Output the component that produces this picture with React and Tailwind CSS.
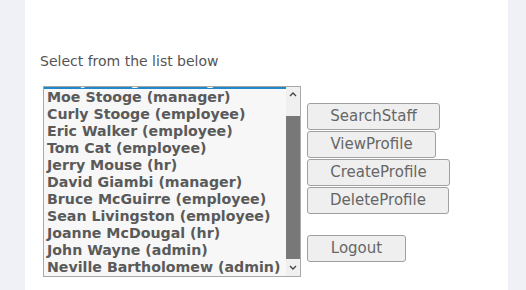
const STAFF = [
  'Larry Stooge (manager)',
  'Moe Stooge (manager)',
  'Curly Stooge (employee)',
  'Eric Walker (employee)',
  'Tom Cat (employee)',
  'Jerry Mouse (hr)',
  'David Giambi (manager)',
  'Bruce McGuirre (employee)',
  'Sean Livingston (employee)',
  'Joanne McDougal (hr)',
  'John Wayne (admin)',
  'Neville Bartholomew (admin)',
];

const BUTTONS = [
  { label: 'SearchStaff', w: 'w-[133px]' },
  { label: 'ViewProfile', w: 'w-[129px]' },
  { label: 'CreateProfile', w: 'w-[143px]' },
  { label: 'DeleteProfile', w: 'w-[142px]' },
];

function Btn({ label, w }) {
  return (
    <button className={`${w} h-[27px] rounded-[3px] border border-[#a0a0a0] bg-[#efefef] text-[15px] text-[#666] leading-none`}>
      {label}
    </button>
  );
}

export default function App() {
  return (
    <div className="min-h-[290px] bg-[#eff1f6] font-['DejaVu_Sans',sans-serif]">
      <div className="ml-[25px] w-[483px] h-[290px] bg-white">
        <p className="pt-[53px] pl-[15px] text-[14px] leading-[17px] text-[#555]">Select from the list below</p>

        <div className="mt-[16px] ml-[18px] flex">
          {/* listbox */}
          <div className="w-[258px] h-[191px] border border-[#a9a9a9] bg-[#f7f7f7] flex overflow-hidden">
            <div className="flex-1 overflow-hidden">
              <div className="-mt-[15px]">
                {STAFF.map((s, i) => (
                  <div
                    key={s}
                    className={`pl-[3px] h-[17px] text-[14.2px] leading-[17px] font-bold whitespace-nowrap ${i === 0 ? 'bg-[#1e88c8] text-white' : 'text-[#5a5a5a]'}`}
                  >
                    {s}
                  </div>
                ))}
              </div>
            </div>
            {/* scrollbar */}
            <div className="w-[14px] flex flex-col bg-[#f0f0f0]">
              <div className="h-[29px] flex justify-center pt-[1px]">
                <svg width="8" height="6" viewBox="0 0 8 6" className="mt-[3px]">
                  <path d="M1 5 L4 2 L7 5" fill="none" stroke="#444" strokeWidth="1.4" />
                </svg>
              </div>
              <div className="h-[143px] bg-[#787878]" />
              <div className="flex-1 flex justify-center items-center">
                <svg width="8" height="6" viewBox="0 0 8 6">
                  <path d="M1 1 L4 4 L7 1" fill="none" stroke="#444" strokeWidth="1.4" />
                </svg>
              </div>
            </div>
          </div>

          {/* buttons */}
          <div className="ml-[6px] pt-[17px] flex flex-col items-start">
            <div className="flex flex-col gap-[1px]">
              {BUTTONS.map((b) => (
                <Btn key={b.label} {...b} />
              ))}
            </div>
            <div className="mt-[21px]">
              <Btn label="Logout" w="w-[99px]" />
            </div>
          </div>
        </div>
      </div>
    </div>
  );
}
